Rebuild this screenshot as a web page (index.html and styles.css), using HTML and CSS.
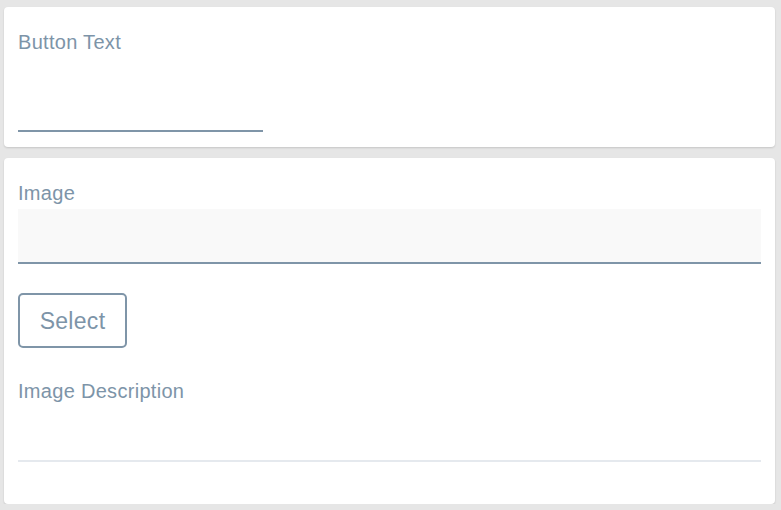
FILE: index.html
```html
<!DOCTYPE html>
<html>
<head>
<meta charset="utf-8">
<link rel="stylesheet" href="styles.css">
</head>
<body>
<div class="page">
  <section class="card card-top">
    <label class="label">Button Text</label>
    <div class="line-input"></div>
  </section>
  <section class="card card-bottom">
    <label class="label">Image</label>
    <div class="filled-input"></div>
    <button class="select-btn">Select</button>
    <label class="label desc-label">Image Description</label>
    <div class="light-input"></div>
  </section>
</div>
</body>
</html>
```
FILE: styles.css
```css
html, body {
  margin: 0;
  padding: 0;
  background: #e6e6e6;
  font-family: "Liberation Sans", Arial, sans-serif;
}
.page {
  display: flex;
  flex-direction: column;
  gap: 11px;
  padding: 7px 6px 0 4px;
}
.card {
  background: #fff;
  border-radius: 4px;
  box-shadow: 0 1px 2px rgba(0, 0, 0, 0.14);
  display: flex;
  flex-direction: column;
  align-items: flex-start;
  padding: 24px 14px 0 14px;
  box-sizing: border-box;
}
.card-top {
  height: 140px;
}
.card-bottom {
  height: 346px;
}
.label {
  font-size: 20px;
  line-height: 23px;
  letter-spacing: 0.3px;
  color: #7d94a8;
  display: block;
}
.line-input {
  width: 245px;
  height: 0;
  margin-top: 76px;
  border-bottom: 2px solid #7f95a8;
}
.filled-input {
  align-self: stretch;
  height: 53px;
  margin-top: 4px;
  background: #f9f9f9;
  border-bottom: 2px solid #7f95a8;
}
.select-btn {
  margin-top: 29px;
  height: 55px;
  width: 109px;
  padding: 2px 0 0 0;
  box-sizing: border-box;
  border: 2px solid #7f95a8;
  border-radius: 5px;
  background: #fff;
  color: #7d94a8;
  font-family: "Liberation Sans", Arial, sans-serif;
  font-size: 23px;
  line-height: 27px;
  letter-spacing: 0.3px;
}
.desc-label {
  margin-top: 32px;
}
.light-input {
  align-self: stretch;
  height: 0;
  margin-top: 57px;
  border-bottom: 2px solid #e5e9ee;
}
```
